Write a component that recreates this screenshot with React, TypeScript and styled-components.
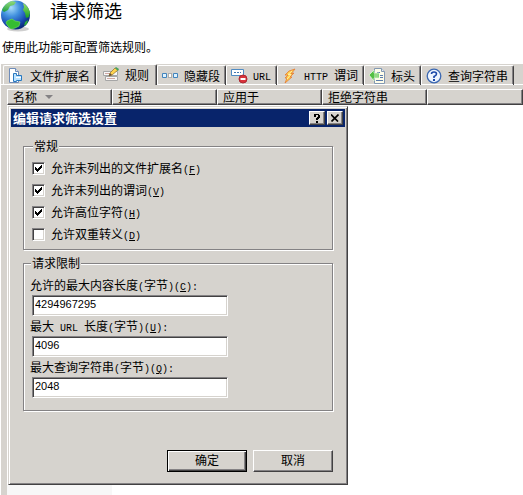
import React, { useState } from "react";
import styled, { createGlobalStyle, css } from "styled-components";

const face = "#d6d3ce";
const shadow = "#848284";
const dark = "#424142";

const GlobalStyle = createGlobalStyle`
  * { box-sizing: border-box; }
  body {
    margin: 0;
    background: #fff;
    color: #000;
    font: 12px/14px "Noto Sans CJK SC", sans-serif;
  }
  button, input { font: inherit; color: inherit; }
`;

const Page = styled.div`
  display: flex;
  flex-direction: column;
  min-height: 100vh;
`;

const Header = styled.header`
  display: flex;
  align-items: flex-start;
  gap: 18px;
  height: 40px;
`;

const Title = styled.h1`
  margin: 0;
  font-size: 18px;
  line-height: 20px;
  font-weight: 400;
`;

const Intro = styled.p`
  margin: 0;
  padding: 0 2px;
  height: 24px;
`;

const Panel = styled.main`
  flex: 1;
  display: flex;
  flex-direction: column;
  margin-left: 1px;
  background: ${face};
`;

const TabStrip = styled.div`
  display: flex;
  align-items: flex-end;
  height: 21px;
  padding-left: 2px;
  box-shadow: inset 0 -1px #fff;
`;

const Tab = styled.button<{ $active?: boolean }>`
  display: flex;
  flex: none;
  align-items: center;
  gap: 5px;
  height: 20px;
  padding: 0 4px;
  border: solid;
  border-width: 1px 1px 0 1px;
  border-color: #fff ${dark} #fff #fff;
  border-radius: 2px 2px 0 0;
  background: ${face};
  box-shadow: inset 0 -1px #fff, inset -1px 0 ${shadow};
  white-space: nowrap;
  ${(p) =>
    p.$active &&
    css`
      height: 21px;
      padding: 0 6px;
      box-shadow: inset -1px 0 ${shadow};
    `}
  svg { flex: none; }
  span { margin-right: 1px; }
`;

const Latin = styled.b`
  font-family: "Liberation Mono", monospace;
  font-size: 10px;
  font-weight: 400;
  line-height: 10px;
  white-space: pre;
`;

const List = styled.div`
  flex: 1;
  display: flex;
  flex-direction: column;
  margin: 4px 0 0 6px;
  background: #fff;
`;

const Columns = styled.div`
  display: grid;
  grid-template-columns: repeat(4, 105px) 1fr;
  height: 16px;
`;

const Column = styled.div`
  display: flex;
  align-items: center;
  gap: 8px;
  padding-left: 5px;
  background: ${face};
  border: 1px solid;
  border-color: #fff ${dark} ${dark} #fff;
  box-shadow: inset -1px -1px ${shadow};
  white-space: nowrap;
`;

const Body = styled.div`
  flex: 1;
  display: flex;
  flex-direction: column;
  padding-top: 1px;
`;

const SortedCell = styled.div`
  flex: 1;
  width: 105px;
  background: #f7f7f7;
`;

const raised = css`
  border: 1px solid;
  border-color: #fff ${dark} ${dark} #fff;
  box-shadow: inset -1px -1px ${shadow};
`;

const Dialog = styled.section`
  width: 100%;
  max-width: 340px;
  margin-left: 1px;
  padding: 1px;
  background: ${face};
  border: 1px solid;
  border-color: ${face} ${dark} ${dark} ${face};
  box-shadow: inset 1px 1px #fff, inset -1px -1px ${shadow};
`;

const TitleBar = styled.div`
  display: flex;
  align-items: center;
  gap: 2px;
  height: 18px;
  margin: 1px;
  padding: 0 2px;
  background: #08246b;
  color: #fff;
`;

const DialogTitle = styled.h2`
  flex: 1;
  margin: 0;
  font-size: 13px;
  line-height: 18px;
  font-weight: 700;
`;

const CaptionButton = styled.button`
  display: grid;
  place-items: center;
  width: 16px;
  height: 14px;
  padding: 0;
  background: ${face};
  ${raised}
`;

const Form = styled.form`
  padding: 11px 13px;
`;

const Group = styled.fieldset<{ $fields?: boolean }>`
  margin: 0 0 6px;
  padding: ${(p) => (p.$fields ? "5px 6px 12px" : "4px 8px")};
  min-width: 0;
  border: 1px solid ${shadow};
  box-shadow: 1px 1px #fff, inset 1px 1px #fff;
`;

const Legend = styled.legend`
  margin-left: 1px;
  padding: 0 1px;
  background: ${face};
  line-height: 14px;
`;

const CheckRow = styled.label`
  display: flex;
  align-items: center;
  gap: 6px;
  height: 22px;
`;

const CheckBox = styled.input`
  appearance: none;
  flex: none;
  width: 13px;
  height: 13px;
  margin: 0;
  border: 1px solid;
  border-color: ${shadow} #fff #fff ${shadow};
  box-shadow: inset 1px 1px ${dark}, inset -1px -1px ${face};
  background: #fff;
  &:checked {
    background: #fff
      url("data:image/svg+xml,%3Csvg xmlns='http://www.w3.org/2000/svg' width='11' height='11' shape-rendering='crispEdges'%3E%3Cpath d='M2 4h1v1h1v1h1v-1h1v-1h1v-1h1v-1h1v3h-1v1h-1v1h-1v1h-1v1h-1v-1h-1v-1h-1z'/%3E%3C/svg%3E")
      center no-repeat;
  }
`;

const FieldLabel = styled.label`
  display: block;
  height: 20px;
  line-height: 20px;
  white-space: nowrap;
`;

const TextBox = styled.input`
  display: block;
  width: 196px;
  max-width: 100%;
  height: 21px;
  margin-left: 2px;
  padding: 0 2px 3px;
  border: 1px solid;
  border-color: ${shadow} #fff #fff ${shadow};
  box-shadow: inset 1px 1px ${dark}, inset -1px -1px ${face};
  background: #fff;
  font-family: "Liberation Sans", sans-serif;
  font-size: 11px;
  outline: none;
`;

const Actions = styled.div`
  display: flex;
  justify-content: flex-end;
  gap: 6px;
  margin-top: 39px;
`;

const Button = styled.button<{ $primary?: boolean }>`
  width: 80px;
  height: 22px;
  padding: 0 0 2px;
  background: ${face};
  line-height: 14px;
  ${raised}
  ${(p) =>
    p.$primary &&
    css`
      border-color: #000;
      box-shadow: inset 1px 1px #fff, inset -1px -1px ${dark}, inset -2px -2px ${shadow};
    `}
`;

const Globe = () => (
  <svg width="32" height="32" viewBox="0 0 32 32" aria-hidden="true">
    <defs>
      <radialGradient id="sea" cx="35%" cy="25%" r="75%">
        <stop offset="0" stopColor="#a9dcfa" />
        <stop offset=".4" stopColor="#4291df" />
        <stop offset=".8" stopColor="#1747ad" />
        <stop offset="1" stopColor="#0b2c7c" />
      </radialGradient>
      <linearGradient id="land" x2="0" y2="1">
        <stop offset="0" stopColor="#9be36a" />
        <stop offset="1" stopColor="#139c22" />
      </linearGradient>
    </defs>
    <ellipse cx="18" cy="29" rx="11" ry="2.5" fill="#bbb" opacity=".7" />
    <circle cx="15.500" cy="15" r="14.500" fill="url(#sea)" />
    <path d="M2 10Q5 3 12 1l4 1-2 3-4 1-2 4-4 2z" fill="url(#land)" opacity=".85" />
    <path d="M7 21l5-2 3 2 5 1-1 4-4 2-4 1-3-3-2-3z" fill="#35bd32" stroke="#6edb50" strokeWidth=".7" />
    <path d="M23 3q5 3 7 9l-1 5-3 1-1-5-2-3 1-3z" fill="url(#land)" />
    <path d="M25 22l3-2-1 4-3 2z" fill="#2fae3a" />
  </svg>
);

const TabIcon = ({ children }: { children: React.ReactNode }) => (
  <svg width="17" height="16" viewBox="0 0 17 16" aria-hidden="true">{children}</svg>
);

const icons = {
  extension: (
    <TabIcon>
      <path d="M1.500.5h6l3 3v11h-9z" fill="#fff" stroke="#6f8cb8" />
      <path d="M7.500.5v3h3" fill="#dce7f5" stroke="#6f8cb8" />
      <path d="M5.500 5.500h3v2h5v5h-5v1h-3z" fill="#bce3ff" stroke="#2878c0" />
      <path d="M8 9.500h5" stroke="#fff" />
    </TabIcon>
  ),
  rules: (
    <TabIcon>
      <path d="M.5 4.500h14v4H.5zM2.500 9.500h12v4h-12z" fill="#f7f7f7" stroke="#a6a6a6" />
      <path d="M2 6.500h6M4 11.500h8" stroke="#d0a9a4" />
      <path d="M6 9l1-3 5-5 3 2-6 5z" fill="#ffd34f" stroke="#957a32" strokeWidth=".8" />
      <path d="M12 1l1-1 3 2-1 2z" fill="#45a35e" />
      <path d="M6 9l1-3 2 2z" fill="#654a39" />
    </TabIcon>
  ),
  segments: (
    <TabIcon>
      <path d="M.5 5.500h4v4h-4zM11.500 5.500h4v4h-4z" fill="#def2ff" stroke="#4284bd" />
      <path d="M6.500 5.500h3v4h-3z" fill="#fff" stroke="#777" strokeDasharray="1 1" />
    </TabIcon>
  ),
  url: (
    <TabIcon>
      <path d="M.5 1.500h12v6H.5z" fill="#fff" stroke="#4f8bc3" />
      <path d="M3 4.500h7" stroke="#4277b0" strokeDasharray="2 1" />
      <circle cx="12" cy="11" r="4" fill="#d9323a" stroke="#ad2732" />
      <path d="M9.500 11h5" stroke="#fff" strokeWidth="2" />
    </TabIcon>
  ),
  verbs: (
    <TabIcon>
      <path d="M7 3l6-2-4 5 3-1-4 4 2 0-7 6 2-5-2 0 3-3-3 0z" fill="#ffca46" stroke="#e47b32" strokeWidth=".8" />
      <path d="M10 3L6 6.500h3L5 11" fill="none" stroke="#fff0a0" />
    </TabIcon>
  ),
  headers: (
    <TabIcon>
      <path d="M5.500.5h7l3 3v12h-10z" fill="#fffde9" stroke="#8298b2" />
      <path d="M12.500.5v3h3" fill="#e4ebf6" stroke="#8298b2" />
      <path d="M8 4.500h3M11 7.500h3M11 9.500h3M7 12.500h7" stroke="#5b7dad" />
      <path d="M0 7l5-5v3h5v5H5v3z" fill="#54bf44" stroke="#eaffdf" strokeWidth=".7" />
      <path d="M6 5v5M8 5v5" stroke="#d5f2c8" />
    </TabIcon>
  ),
  query: (
    <TabIcon>
      <circle cx="8" cy="8" r="6.800" fill="#edf5ff" stroke="#3c68b2" strokeWidth="1.300" />
      <path d="M5.500 6Q5.500 4 8 4t2.500 2Q10.500 7.500 8 8.500V10" fill="none" stroke="#1746a8" strokeWidth="1.600" />
      <path d="M7 11h2v2H7z" fill="#1746a8" />
    </TabIcon>
  ),
};

const tabs = [
  { icon: icons.extension, label: "文件扩展名" },
  { icon: icons.rules, label: "规则" },
  { icon: icons.segments, label: "隐藏段" },
  { icon: icons.url, label: <Latin>URL</Latin> },
  { icon: icons.verbs, label: <><Latin>HTTP </Latin>谓词</> },
  { icon: icons.headers, label: "标头" },
  { icon: icons.query, label: "查询字符串" },
];

const options = [
  { text: "允许未列出的文件扩展名", hotkey: "F", on: true },
  { text: "允许未列出的谓词", hotkey: "V", on: true },
  { text: "允许高位字符", hotkey: "H", on: true },
  { text: "允许双重转义", hotkey: "D", on: false },
];

const Hotkey = ({ letter }: { letter: string }) => (
  <Latin>(<u>{letter}</u>)</Latin>
);

const Unit = () => (
  <><Latin>(</Latin>字节<Latin>)</Latin></>
);

const limits = [
  { id: "content", label: "允许的最大内容长度", hotkey: "C", value: "4294967295" },
  { id: "url", label: <>最大<Latin> URL </Latin>长度</>, hotkey: "U", value: "4096" },
  { id: "query", label: "最大查询字符串", hotkey: "Q", value: "2048" },
];

export default function App() {
  const [active, setActive] = useState(1);
  return (
    <>
      <GlobalStyle />
      <Page>
        <Header>
          <Globe />
          <Title>请求筛选</Title>
        </Header>
        <Intro>使用此功能可配置筛选规则。</Intro>
        <Panel>
          <TabStrip role="tablist">
            {tabs.map((tab, i) => (
              <Tab key={i} role="tab" aria-selected={i === active} $active={i === active} onClick={() => setActive(i)}>
                {tab.icon}
                <span>{tab.label}</span>
              </Tab>
            ))}
          </TabStrip>
          <List>
            <Columns>
              <Column>
                名称
                <svg width="8" height="4" aria-hidden="true"><path d="M0 0h8L4 4z" fill={shadow} /></svg>
              </Column>
              <Column>扫描</Column>
              <Column>应用于</Column>
              <Column>拒绝字符串</Column>
              <Column />
            </Columns>
            <Body>
              <Dialog role="dialog" aria-labelledby="dialog-title">
                <TitleBar>
                  <DialogTitle id="dialog-title">编辑请求筛选设置</DialogTitle>
                  <CaptionButton aria-label="帮助">
                    <svg width="8" height="9" shapeRendering="crispEdges" aria-hidden="true">
                      <path d="M1 0h5v1h1v3H6v1H5v1H3V4h1V3h1V1H3v2H1zM3 7h2v2H3z" />
                    </svg>
                  </CaptionButton>
                  <CaptionButton aria-label="关闭">
                    <svg width="8" height="8" aria-hidden="true">
                      <path d="M0 .5l7 7M7.500.5l-7 7" stroke="#000" strokeWidth="1.700" />
                    </svg>
                  </CaptionButton>
                </TitleBar>
                <Form onSubmit={(e) => e.preventDefault()}>
                  <Group>
                    <Legend>常规</Legend>
                    {options.map((o) => (
                      <CheckRow key={o.hotkey}>
                        <CheckBox type="checkbox" defaultChecked={o.on} />
                        <span>{o.text}<Hotkey letter={o.hotkey} /></span>
                      </CheckRow>
                    ))}
                  </Group>
                  <Group $fields>
                    <Legend>请求限制</Legend>
                    {limits.map((l) => (
                      <React.Fragment key={l.id}>
                        <FieldLabel htmlFor={l.id}>
                          {l.label}<Unit /><Hotkey letter={l.hotkey} /><Latin>:</Latin>
                        </FieldLabel>
                        <TextBox id={l.id} type="text" defaultValue={l.value} />
                      </React.Fragment>
                    ))}
                  </Group>
                  <Actions>
                    <Button type="submit" $primary>确定</Button>
                    <Button type="button">取消</Button>
                  </Actions>
                </Form>
              </Dialog>
              <SortedCell />
            </Body>
          </List>
        </Panel>
      </Page>
    </>
  );
}
